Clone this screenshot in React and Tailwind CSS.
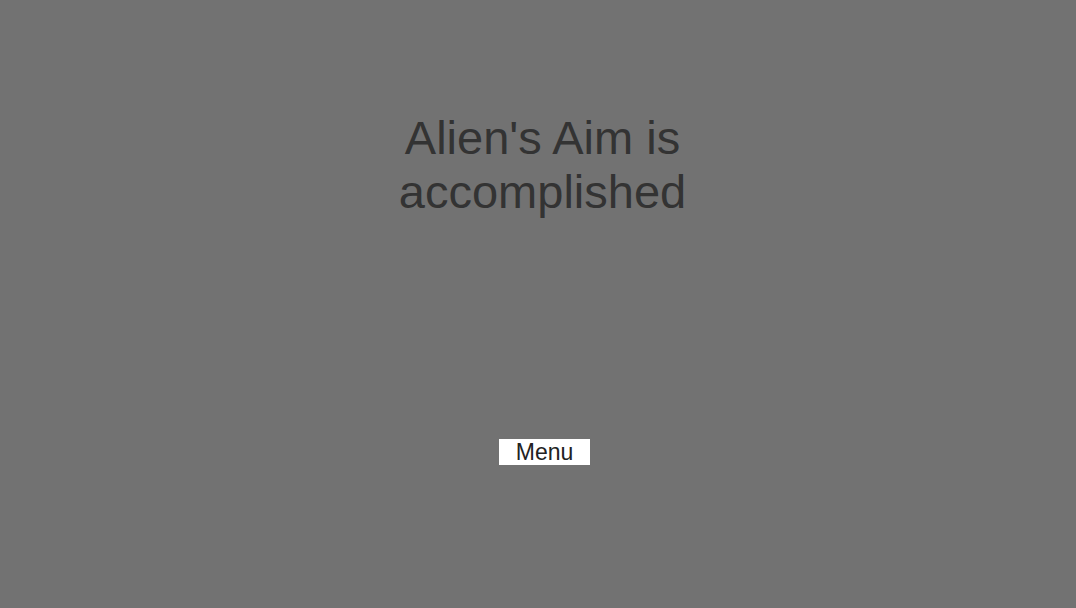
export default function App() {
  return (
    <div
      className="w-[1076px] h-[608px] bg-[#727272] flex flex-col items-center overflow-hidden"
      style={{ fontFamily: '"Liberation Sans", Arial, sans-serif' }}
    >
      <div className="pl-[9px] mt-[111px] w-[400px] text-center text-[47px] leading-[54px] text-[#333333]">
        Alien's Aim is
        <br />
        accomplished
      </div>
      <div className="pl-[13px] mt-[220px]">
        <div className="w-[91px] h-[26px] bg-white flex items-center justify-center text-[23px] leading-none text-[#222222]">
          Menu
        </div>
      </div>
    </div>
  );
}
